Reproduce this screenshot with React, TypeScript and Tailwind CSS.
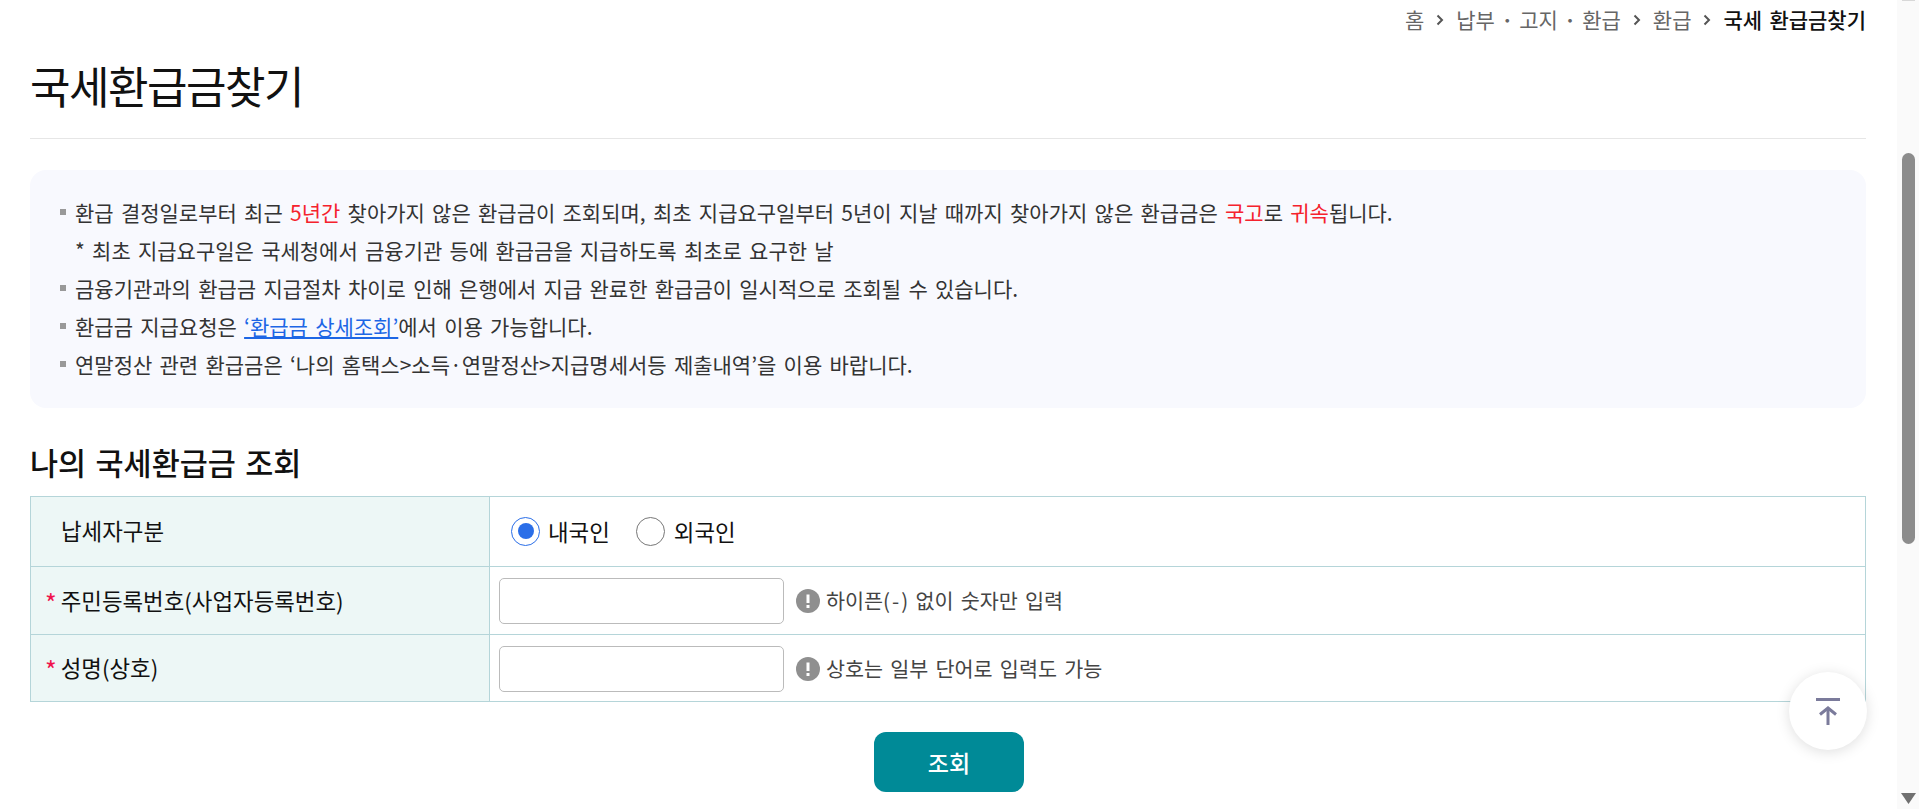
const font = "font-['Noto_Sans_CJK_KR','Noto_Sans',sans-serif]";

const Chevron = () => (
  <svg width="8" height="12" viewBox="0 0 8 12" fill="none" className="mx-[12px] shrink-0">
    <path d="M1.500 1.500L6 6l-4.500 4.500" stroke="#555" strokeWidth="2" />
  </svg>
);

const Info = () => (
  <svg width="24" height="24" viewBox="0 0 24 24" className="shrink-0 mr-[6px]">
    <circle cx="12" cy="12" r="12" fill="#8f8f8f" />
    <rect x="10.500" y="5.500" width="3" height="8.500" fill="#fff" />
    <rect x="10.500" y="16" width="3" height="3" fill="#fff" />
  </svg>
);

const Dot = () => <span className="mx-[2.500px] font-bold">ㆍ</span>;

const Bullet = () => <span className="absolute left-[-15px] top-[16px] w-[6px] h-[6px] bg-[#999]" />;

const Radio = ({ checked }: { checked?: boolean }) => (
  <span
    className={`flex items-center justify-center w-[29px] h-[29px] rounded-full border bg-white ${
      checked ? "border-[#2a6ee8]" : "border-[#777]"
    }`}
  >
    {checked && <span className="w-[16px] h-[16px] rounded-full bg-[#2a6ee8]" />}
  </span>
);

const Required = () => <span className="text-[#f0134d] text-[25px] font-normal mr-[4px] leading-none relative top-[3px]">*</span>;

export default function App() {
  return (
    <div className={`${font} [word-spacing:0.16em] flex h-[809px] w-full overflow-hidden bg-white text-[#111]`}>
      <main className="flex-1 min-w-0 pl-[30px] pr-[31px] relative">
        <nav className="flex items-center justify-end h-[40px] text-[21px] text-[#666]">
          <span>홈</span>
          <Chevron />
          <span>
            납부
            <Dot />
            고지
            <Dot />
            환급
          </span>
          <Chevron />
          <span>환급</span>
          <Chevron />
          <strong className="font-medium text-[#111]">국세 환급금찾기</strong>
        </nav>

        <h1 className="flex items-center h-[99px] text-[44px] font-normal border-b border-[#e6e6e6] tracking-[-1.5px] pb-[8px]">
          국세환급금찾기
        </h1>

        <section className="mt-[31px] h-[238px] rounded-[16px] bg-[#f8f9fe] pt-[23px] text-[21px] text-[#333] leading-[38px] pl-[45px]">
          <ul>
            <li className="relative">
              <Bullet />
              환급 결정일로부터 최근 <span className="text-[#f5222d]">5년간</span> 찾아가지 않은 환급금이 조회되며, 최초 지급요구일부터 5년이 지날 때까지 찾아가지 않은 환급금은{" "}
              <span className="text-[#f5222d]">국고</span>로 <span className="text-[#f5222d]">귀속</span>됩니다.
            </li>
            <li>* 최초 지급요구일은 국세청에서 금융기관 등에 환급금을 지급하도록 최초로 요구한 날</li>
            <li className="relative">
              <Bullet />
              금융기관과의 환급금 지급절차 차이로 인해 은행에서 지급 완료한 환급금이 일시적으로 조회될 수 있습니다.
            </li>
            <li className="relative">
              <Bullet />
              환급금 지급요청은 <a className="text-[#1d66e5] underline">‘환급금 상세조회’</a>에서 이용 가능합니다.
            </li>
            <li className="relative">
              <Bullet />
              연말정산 관련 환급금은 ‘나의 홈택스&gt;소득·연말정산&gt;지급명세서등 제출내역’을 이용 바랍니다.
            </li>
          </ul>
        </section>

        <h2 className="mt-[33px] h-[42px] leading-[42px] text-[30.500px] font-medium">나의 국세환급금 조회</h2>

        <table className="mt-[13px] w-full border-collapse border border-[#b5d5d9] text-[22.400px]">
          <tbody>
            <tr className="h-[70px] border-b border-[#b5d5d9]">
              <th className="w-[459px] bg-[#edf7f6] border-r border-[#b5d5d9] text-left font-normal pl-[30px] pb-[2px]">납세자구분</th>
              <td className="pl-[21px]">
                <div className="flex items-center">
                  <Radio checked />
                  <span className="ml-[8px] mr-[26px]">내국인</span>
                  <Radio />
                  <span className="ml-[9px]">외국인</span>
                </div>
              </td>
            </tr>
            <tr className="h-[68px] border-b border-[#b5d5d9]">
              <th className="bg-[#edf7f6] border-r border-[#b5d5d9] text-left font-normal pl-[14px]">
                <Required />
                주민등록번호(사업자등록번호)
              </th>
              <td className="pl-[9px]">
                <div className="flex items-center">
                  <input className="w-[285px] h-[46px] rounded-[5px] border border-[#bbb] bg-white mr-[12px]" />
                  <Info />
                  <span className="text-[20.700px] text-[#444]">
                    하이픈(<span className="px-[2px]">-</span>) 없이 숫자만 입력
                  </span>
                </div>
              </td>
            </tr>
            <tr className="h-[67px]">
              <th className="bg-[#edf7f6] border-r border-[#b5d5d9] text-left font-normal pl-[14px]">
                <Required />
                성명(상호)
              </th>
              <td className="pl-[9px] pt-[1px]">
                <div className="flex items-center">
                  <input className="w-[285px] h-[46px] rounded-[5px] border border-[#bbb] bg-white mr-[12px]" />
                  <Info />
                  <span className="text-[20.700px] text-[#444]">상호는 일부 단어로 입력도 가능</span>
                </div>
              </td>
            </tr>
          </tbody>
        </table>

        <div className="flex justify-center mt-[30px] pl-[2px]">
          <button className="w-[150px] h-[60px] rounded-[12px] bg-[#008a97] text-white text-[23px] font-medium">조회</button>
        </div>

        <button className="absolute left-[1789px] top-[672px] w-[78px] h-[78px] rounded-full bg-white shadow-[0_2px_14px_rgba(0,0,0,0.13)] flex items-center justify-center">
          <svg width="24" height="27" viewBox="0 0 24 27" fill="none" stroke="#7b7b9b" strokeWidth="3">
            <path d="M0 1.500h24" />
            <path d="M12 27V10" />
            <path d="M4 16.500L12 10l8 6.500" />
          </svg>
        </button>
      </main>

      <aside className="w-[22px] shrink-0 bg-[#fafafa] flex flex-col pl-[5px]">
        <span className="w-[13px] h-[1px] bg-[#d8d8d8]" />
        <span className="w-[13px] h-[391px] mt-[152px] rounded-full bg-[#8c8c8c]" />
        <svg width="15" height="11" viewBox="0 0 15 11" className="mt-auto mb-[5px] ml-[-1px]">
          <path d="M7.500 11L0 0h15z" fill="#707070" />
        </svg>
      </aside>
    </div>
  );
}
